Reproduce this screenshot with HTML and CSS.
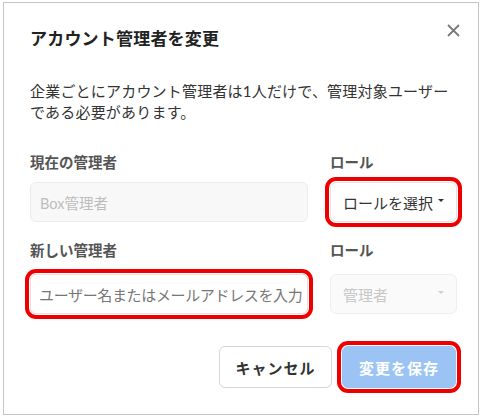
FILE: index.html
```html
<!DOCTYPE html>
<html lang="ja">
<head>
<meta charset="utf-8">
<link rel="stylesheet" href="styles.css">
</head>
<body>
<div class="modal">
  <div class="header">
    <h1 class="title">アカウント管理者を変更</h1>
    <button class="close" aria-label="閉じる">
      <svg width="13" height="13" viewBox="0 0 13 13"><path d="M1 1L12 12M12 1L1 12" stroke="#7a7a7a" stroke-width="1.8" fill="none"/></svg>
    </button>
  </div>
  <p class="desc">企業ごとにアカウント管理者は1人だけで、管理対象ユーザーである必要があります。</p>
  <div class="form">
    <div class="label">現在の管理者</div>
    <div class="label">ロール</div>
    <div class="input disabled">Box管理者</div>
    <div class="select marked"><span>ロールを選択</span><i class="caret"></i></div>
    <div class="label second">新しい管理者</div>
    <div class="label second">ロール</div>
    <div class="input placeholder marked">ユーザー名またはメールアドレスを入力</div>
    <div class="select disabled"><span>管理者</span><i class="caret light"></i></div>
  </div>
  <div class="footer">
    <button class="btn cancel">キャンセル</button>
    <button class="btn save marked">変更を保存</button>
  </div>
</div>
</body>
</html>
```
FILE: styles.css
```css
* { box-sizing: border-box; }
body {
  margin: 0;
  background: #fff;
  font-family: Lato, "Noto Sans CJK JP", sans-serif;
  color: #222;
}
.modal {
  margin: 2px 0 0 3px;
  width: 476px;
  height: 413px;
  border: 1px solid #c4c4c4;
  padding: 0 22px 0 26px;
}
.header {
  display: flex;
  justify-content: space-between;
  align-items: flex-start;
  padding-top: 24px;
}
.title {
  margin: 0;
  font-size: 17px;
  line-height: 24px;
  font-weight: 700;
  color: #222;
  letter-spacing: 0.2px;
}
.close {
  border: 0;
  background: none;
  padding: 0;
  margin: -3px -4px 0 0;
  width: 13px;
  height: 13px;
  display: flex;
}
.desc {
  margin: 30px 0 0;
  font-size: 15px;
  line-height: 21px;
  color: #333;
  letter-spacing: 0.2px;
}
.form {
  display: grid;
  grid-template-columns: 278px 127px;
  column-gap: 22px;
  margin-top: 30px;
}
.label {
  font-size: 14.5px;
  line-height: 20px;
  font-weight: 700;
  color: #555;
  margin-bottom: 9px;
}
.label.second { margin-top: 19px; margin-bottom: 13px; }
.input, .select {
  height: 40px;
  border: 1px solid #e3e3e3;
  border-radius: 6px;
  display: flex;
  align-items: center;
  font-size: 15px;
  white-space: nowrap;
  overflow: hidden;
}
.input { padding: 0 8px; }
.input.disabled {
  background: #f8f8f8;
  border-color: #ececec;
  color: #bdbdbd;
  font-size: 14.5px;
  padding-left: 9px;
}
.input.placeholder { color: #777; letter-spacing: -0.35px; }
.select {
  justify-content: space-between;
  padding: 0 12px 0 12px;
  color: #333;
  background: #fff;
}
.select.disabled {
  background: #fafafa;
  border-color: #efefef;
  color: #c8c8c8;
}
.caret {
  width: 0;
  height: 0;
  border-left: 3px solid transparent;
  border-right: 3px solid transparent;
  border-top: 3px solid #333;
  margin-top: -4px;
}
.caret.light { border-top-color: #d0d0d0; }
.marked {
  box-shadow: 0 0 0 1px #fff, 0 0 0 5px #ee0000;
}
.footer {
  display: flex;
  justify-content: flex-end;
  gap: 10px;
  margin-top: 32px;
}
.btn {
  height: 42px;
  border-radius: 6px;
  font-family: Lato, "Noto Sans CJK JP", sans-serif;
  font-size: 15px;
  font-weight: 700;
  letter-spacing: 1px;
  padding: 0;
}
.cancel {
  width: 113px;
  background: #fff;
  border: 1px solid #d6d6d6;
  color: #333;
}
.save {
  width: 114px;
  background: #9bc4f4;
  border: 1px solid #9bc4f4;
  color: #fff;
}
```
